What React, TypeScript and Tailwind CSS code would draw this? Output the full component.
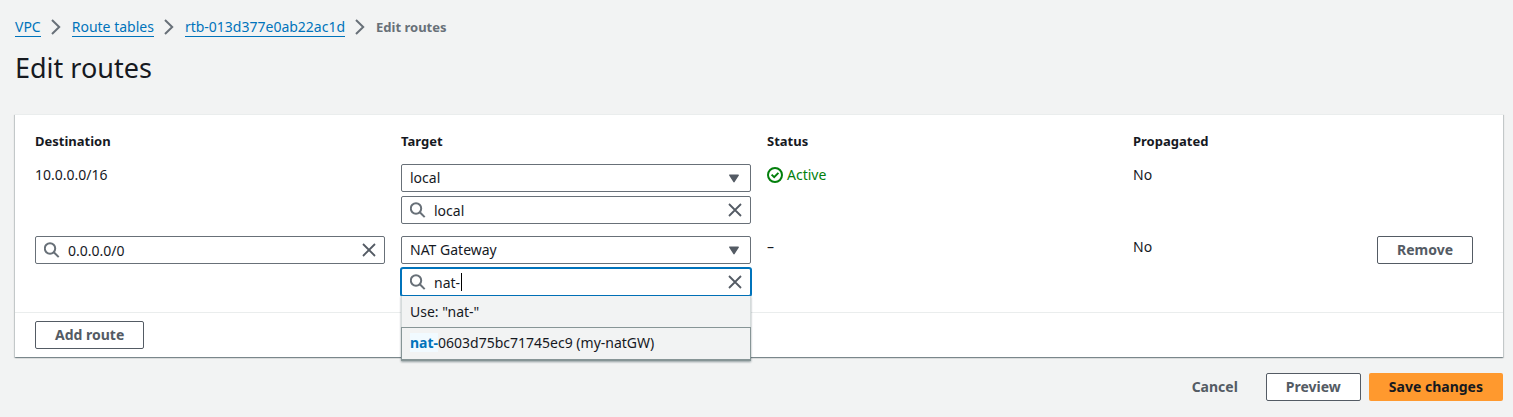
import { useState } from "react";
import type { ReactNode } from "react";

const crumbs = ["VPC", "Route tables", "rtb-013d377e0ab22ac1d"];

function Chevron() {
  return (
    <svg viewBox="0 0 16 16" className="size-4 shrink-0" fill="none" stroke="#687078" strokeWidth="2" aria-hidden="true">
      <path d="M4 1l7.2 7L4 15" />
    </svg>
  );
}

function SearchIcon() {
  return (
    <svg viewBox="0 0 16 16" className="size-4 shrink-0" fill="none" stroke="#687078" strokeWidth="2" aria-hidden="true">
      <circle cx="6" cy="6.5" r="5.2" />
      <path d="M9.8 10.2l4.9 4.9" />
    </svg>
  );
}

function CloseIcon() {
  return (
    <svg viewBox="0 0 16 16" className="size-4" fill="none" stroke="#545b64" strokeWidth="1.8" aria-hidden="true">
      <path d="M2 2l12 12M14 2L2 14" />
    </svg>
  );
}

function StatusOk() {
  return (
    <svg viewBox="0 0 16 16" className="size-4 shrink-0" fill="none" stroke="#037f0c" strokeWidth="2" aria-hidden="true">
      <circle cx="8" cy="8" r="7" />
      <path d="M4.6 7.6l2.6 2.5 4.2-4.2" />
    </svg>
  );
}

function SearchField({ label, initial, active = false }: { label: string; initial: string; active?: boolean }) {
  const [value, setValue] = useState(initial);
  const frame = active
    ? "border-[#0073bb] ring-1 ring-[#0073bb]"
    : "border-[#687078]";
  return (
    <div className={`flex h-7 items-center rounded-xs border bg-white pr-[7px] pl-2 ${frame}`}>
      <SearchIcon />
      <input
        type="text"
        aria-label={label}
        value={value}
        onChange={(e) => setValue(e.target.value)}
        className="ml-2 min-w-0 flex-1 bg-transparent pt-0.5 outline-none"
      />
      <button type="button" aria-label={`Clear ${label}`} onClick={() => setValue("")}>
        <CloseIcon />
      </button>
    </div>
  );
}

function TargetSelect({ label, value }: { label: string; value: string }) {
  return (
    <div className="relative">
      <select
        aria-label={label}
        defaultValue={value}
        className="block h-7 w-full appearance-none rounded-xs border border-[#687078] bg-white px-2 outline-none"
      >
        <option>{value}</option>
      </select>
      <svg viewBox="0 0 12 9" className="pointer-events-none absolute top-2.5 right-[11px] h-[9px] w-3" aria-hidden="true">
        <path d="M1.8 1.2h8.4L6 7.6z" fill="#545b64" stroke="#545b64" strokeWidth="1.5" strokeLinejoin="round" />
      </svg>
    </div>
  );
}

function OutlineButton({ children }: { children: ReactNode }) {
  return (
    <button
      type="button"
      className="h-7 rounded-xs border border-[#545b64] bg-white px-[19px] font-bold whitespace-nowrap text-[#545b64]"
    >
      {children}
    </button>
  );
}

export default function App() {
  return (
    <main className="min-h-screen bg-[#f2f3f3] pt-4 pr-2.5 pb-4 pl-[15px] font-['Noto_Sans',sans-serif] text-sm leading-[22px] text-[#16191f]">
      <nav aria-label="Breadcrumb">
        <ol className="flex items-center gap-2">
          {crumbs.map((c) => (
            <li key={c} className="flex items-center gap-[7px]">
              <a href="#" className="border-b border-[#0073bb] leading-[19px] text-[#0073bb]">
                {c}
              </a>
              <Chevron />
            </li>
          ))}
          <li className="text-[13px] font-bold text-[#687078]" aria-current="page">Edit routes</li>
        </ol>
      </nav>
      <h1 className="mt-3 text-[27px] leading-9">Edit routes</h1>

      <section className="mt-7 border-t border-[#eaeded] bg-white shadow-[0_1px_1px_0_rgba(0,28,36,0.3),1px_1px_1px_0_rgba(0,28,36,0.15),-1px_1px_1px_0_rgba(0,28,36,0.15)]">
        <div className="pt-[15px] pr-1 pb-4 pl-5">
          <table className="w-full table-fixed text-left">
            <colgroup>
              <col className="w-1/4" />
              <col className="w-1/4" />
              <col className="w-1/4" />
              <col />
              <col className="w-[122px]" />
            </colgroup>
            <thead className="text-[13px]">
              <tr>
                <th scope="col">Destination</th>
                <th scope="col">Target</th>
                <th scope="col">Status</th>
                <th scope="col">Propagated</th>
                <td />
              </tr>
            </thead>
            <tbody className="align-top">
              <tr>
                <td className="pt-3 pr-4">10.0.0.0/16</td>
                <td className="pt-3 pr-4">
                  <div className="flex flex-col gap-1">
                    <TargetSelect label="Target type" value="local" />
                    <SearchField label="Target" initial="local" />
                  </div>
                </td>
                <td className="pt-3 pr-4">
                  <span className="flex items-center gap-1 text-[#037f0c]">
                    <StatusOk />
                    Active
                  </span>
                </td>
                <td className="pt-3">No</td>
                <td />
              </tr>
              <tr>
                <td className="pt-3 pr-4">
                  <SearchField label="Destination" initial="0.0.0.0/0" />
                </td>
                <td className="pt-3 pr-4">
                  <div className="flex flex-col gap-1">
                    <TargetSelect label="Target type" value="NAT Gateway" />
                    <div className="relative">
                      <SearchField label="Target" initial="nat-" active />
                      <span className="absolute top-[5px] left-[60px] h-[18px] w-px bg-black" />
                      <ul
                        role="listbox"
                        aria-label="Target suggestions"
                        className="absolute inset-x-0 top-full z-10 bg-[#f2f3f3] shadow-[0_1px_2px_0_rgba(0,28,36,0.4)]"
                      >
                        <li role="option" aria-selected="false" className="border-x border-[#d5dbdb] px-2 pt-1 pb-[3px] leading-6">
                          Use: "nat-"
                        </li>
                        <li
                          role="option"
                          aria-selected="true"
                          className="border border-b-2 border-[#879596] px-2 pt-1 pb-[5px]"
                        >
                          <span className="bg-[#f1faff] font-bold text-[#0073bb]">nat-</span>
                          0603d75bc71745ec9 (my-natGW)
                        </li>
                      </ul>
                    </div>
                  </div>
                </td>
                <td className="pt-3 pr-4">–</td>
                <td className="pt-3">No</td>
                <td className="pt-3">
                  <OutlineButton>Remove</OutlineButton>
                </td>
              </tr>
            </tbody>
          </table>
        </div>
        <div className="border-t border-[#eaeded] px-5 py-2">
          <OutlineButton>Add route</OutlineButton>
        </div>
      </section>

      <div className="mt-4 flex justify-end gap-2">
        <button type="button" className="h-7 px-5 font-bold text-[#545b64]">
          Cancel
        </button>
        <OutlineButton>Preview</OutlineButton>
        <button type="button" className="h-7 rounded-xs bg-[#ff992e] px-5 font-bold text-[#16191f]">
          Save changes
        </button>
      </div>
    </main>
  );
}
